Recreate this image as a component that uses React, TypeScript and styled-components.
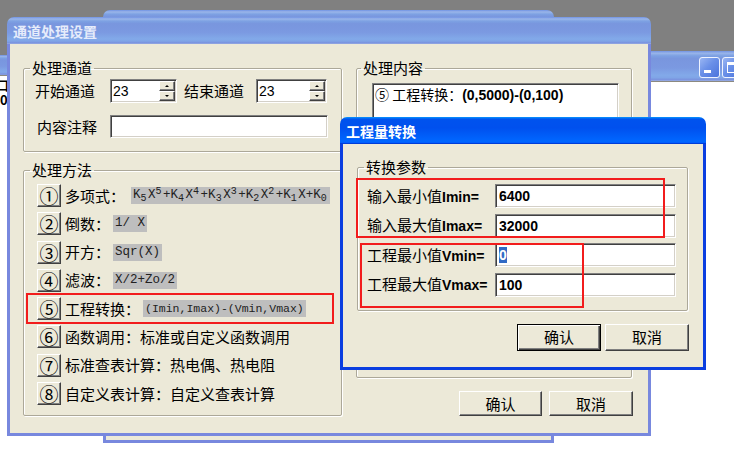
import styled, { createGlobalStyle, css } from 'styled-components'

const CJK = `"Noto Sans CJK SC", "Noto Sans CJK TC", sans-serif`
const SANS = `"Liberation Sans", Arial, sans-serif`
const MONO = `"Liberation Mono", "DejaVu Sans Mono", monospace`

const INACTIVE_TITLE =
  'linear-gradient(180deg, #7697e7 0%, #7e9ee3 3%, #94afe8 6%, #97b4e9 8%, #82a5e4 14%, #7c9fe2 17%, #7996de 25%, #7b99e1 56%, #82a9e9 81%, #80a5e7 89%, #7b96e1 94%, #7a93df 97%, #abbae3 100%)'
const ACTIVE_TITLE =
  'linear-gradient(180deg, #0997ff 0%, #0053ee 8%, #0050ee 40%, #0066ff 88%, #0066ff 93%, #005bff 95%, #003dd7 96%, #003dd7 100%)'

const GlobalStyle = createGlobalStyle`
  html, body { margin: 0; padding: 0; }
  body { font-family: ${CJK}; color: #000; }
`

const raised = css`
  border: 1px solid;
  border-color: #fff #404040 #404040 #fff;
  box-shadow: inset -1px -1px 0 #808080;
  background: #ece9d8;
`

const sunken = css`
  border: 1px solid;
  border-color: #808080 #fff #fff #808080;
  box-shadow: inset 1px 1px 0 #404040, inset -1px -1px 0 #d4d0c8;
  background: #fff;
`

const Desktop = styled.div`
  position: relative;
  width: 734px;
  height: 454px;
  overflow: hidden;
  background: #808080;
`

const Window = styled.div<{ $x: number; $y: number; $w: number; $h: number }>`
  position: absolute;
  left: ${p => p.$x}px;
  top: ${p => p.$y}px;
  width: ${p => p.$w}px;
  height: ${p => p.$h}px;
  display: flex;
  flex-direction: column;
  border-radius: 7px 7px 0 0;
  overflow: hidden;
`

const TitleBar = styled.div<{ $active?: boolean; $h: number }>`
  flex: none;
  height: ${p => p.$h}px;
  box-sizing: border-box;
  display: flex;
  align-items: center;
  padding: 0 5px 0 6px;
  background: ${p => (p.$active ? ACTIVE_TITLE : INACTIVE_TITLE)};
  color: ${p => (p.$active ? '#fff' : '#e6ecfb')};
  font: bold 14px/16px ${CJK};
  white-space: nowrap;
`

const Frame = styled.div<{ $active?: boolean }>`
  flex: 1;
  min-height: 0;
  border: 3px solid ${p => (p.$active ? '#0a3ee0' : '#7888de')};
  border-top: none;
  background: #ece9d8;
`

const Paper = styled.div`
  flex: 1;
  min-height: 0;
  background: #fff;
  border-top: 1px solid #8c8a80;
`

const Controls = styled.div`
  margin-left: auto;
  align-self: flex-start;
  padding-top: 6px;
  display: flex;
  gap: 2px;
`

const ControlButton = styled.div`
  width: 21px;
  height: 21px;
  box-sizing: border-box;
  border: 1px solid #eef3ff;
  border-radius: 3px;
  background: linear-gradient(135deg, #9ab6f3 0%, #6a90e8 45%, #4b74dc 100%);
  display: flex;
  align-items: center;
  justify-content: center;
`

const BackBody = styled.div`
  width: 307px;
  box-sizing: border-box;
  overflow: hidden;
  padding: 2px 0 0 296px;
  font: bold 13px/14px ${CJK};
`

const BackLine = styled.div<{ $indent: number }>`
  padding-left: ${p => p.$indent}px;
  margin-bottom: 1px;
`

const Mark = styled.div<{ $x: number; $y: number; $w: number; $h: number }>`
  position: absolute;
  left: ${p => p.$x}px;
  top: ${p => p.$y}px;
  width: ${p => p.$w}px;
  height: ${p => p.$h}px;
  box-sizing: border-box;
  border: 2px solid #f21c1c;
  pointer-events: none;
`

const Group = styled.fieldset<{ $indent: number; $grow?: boolean }>`
  margin: 0;
  min-width: 0;
  padding: 0 0 0 ${p => p.$indent}px;
  border: 1px solid #aca899;
  border-radius: 2px;
  box-shadow: 1px 1px 0 #fff, inset 1px 1px 0 #fff;
  ${p => p.$grow && 'flex: 1;'}
`

const Legend = styled.legend`
  padding: 0 2px;
  font: 15px/16px ${CJK};
`

const GroupBody = styled.div<{ $pad: string; $gap: number }>`
  display: flex;
  flex-direction: column;
  gap: ${p => p.$gap}px;
  padding: ${p => p.$pad};
`

const MainBody = styled.div`
  display: grid;
  grid-template-columns: 319px 276px;
  column-gap: 14px;
  padding: 16px 0 0 13px;
`

const Column = styled.div<{ $gap: number }>`
  display: flex;
  flex-direction: column;
  gap: ${p => p.$gap}px;
`

const FieldRow = styled.div`
  display: flex;
  align-items: center;
`

const FieldLabel = styled.span<{ $w: number; $indent?: number }>`
  flex: none;
  width: ${p => p.$w}px;
  padding-left: ${p => p.$indent ?? 0}px;
  box-sizing: border-box;
  font: 15px/16px ${CJK};
  white-space: nowrap;
`

const Ascii = styled.span`
  font: bold 14px/16px ${SANS};
`

const Field = styled.div<{ $w: number; $h: number }>`
  ${sunken};
  flex: none;
  width: ${p => p.$w}px;
  height: ${p => p.$h}px;
  box-sizing: border-box;
  display: flex;
  align-items: center;
  padding-left: 3px;
  font: bold 14px/16px ${SANS};
`

const Selected = styled.span`
  background: #316ac5;
  color: #fff;
`

const SpinBox = styled.div<{ $w: number }>`
  ${sunken};
  flex: none;
  width: ${p => p.$w}px;
  height: 24px;
  box-sizing: border-box;
  display: flex;
  padding: 1px 1px 1px 2px;
`

const SpinValue = styled.span`
  flex: 1;
  font: 14px/20px ${SANS};
`

const Spinner = styled.div`
  width: 16px;
  display: flex;
  flex-direction: column;
`

const SpinArrow = styled.div<{ $down?: boolean }>`
  ${raised};
  flex: 1;
  display: flex;
  align-items: center;
  justify-content: center;
  &::after {
    content: '';
    border-left: 2px solid transparent;
    border-right: 2px solid transparent;
    ${p => (p.$down ? 'border-top: 2px solid #000;' : 'border-bottom: 2px solid #000;')}
  }
`

const ContentBox = styled.div`
  ${sunken};
  width: 247px;
  height: 64px;
  box-sizing: border-box;
  padding: 2px 2px;
  font: 14px/17px ${CJK};
  white-space: nowrap;
`

const MethodRow = styled.div`
  display: flex;
  align-items: center;
  height: 23px;
`

const NumButton = styled.div`
  ${raised};
  flex: none;
  width: 24px;
  height: 23px;
  box-sizing: border-box;
  display: flex;
  align-items: center;
  justify-content: center;
  font: 19px/1 ${CJK};
`

const MethodText = styled.span`
  margin-left: 4px;
  font: 15px/16px ${CJK};
  white-space: nowrap;
`

const Formula = styled.span<{ $gap?: number; $size?: number }>`
  display: inline-block;
  margin-left: ${p => p.$gap ?? 3}px;
  padding: 0 2px;
  height: 17px;
  background: #bebebe;
  color: #222;
  font: ${p => p.$size ?? 12.5}px/17px ${MONO};
  white-space: pre;
`

const Idx = styled.span<{ $sub?: boolean }>`
  display: inline-block;
  width: 7.5px;
  font-size: 10px;
  line-height: 10px;
  vertical-align: ${p => (p.$sub ? '-3px' : '4px')};
`

const ButtonRow = styled.div<{ $top: number; $gap: number; $shift?: number }>`
  display: flex;
  justify-content: flex-end;
  gap: ${p => p.$gap}px;
  margin-top: ${p => p.$top}px;
  margin-right: ${p => p.$shift ?? 0}px;
`

const PushButton = styled.div<{ $w: number; $h: number; $default?: boolean }>`
  ${raised};
  width: ${p => p.$w}px;
  height: ${p => p.$h}px;
  box-sizing: border-box;
  display: flex;
  align-items: center;
  justify-content: center;
  font: 15px/16px ${CJK};
  ${p =>
    p.$default &&
    css`
      border-color: #000;
      box-shadow: inset 1px 1px 0 #fff, inset -1px -1px 0 #404040, inset -2px -2px 0 #808080;
    `}
`

const PopupBody = styled.div`
  display: flex;
  flex-direction: column;
  padding: 15px 15px 0 14px;
`

const K = (i: number) => (
  <>
    K<Idx $sub>{i}</Idx>
  </>
)
const XP = (i: number) => (
  <>
    X<Idx>{i}</Idx>
  </>
)

const methods = [
  {
    n: '①',
    text: '多项式：',
    formula: (
      <Formula $gap={6}>
        {K(5)}{XP(5)}+{K(4)}{XP(4)}+{K(3)}{XP(3)}+{K(2)}{XP(2)}+{K(1)}X+{K(0)}
      </Formula>
    ),
  },
  { n: '②', text: '倒数：', formula: <Formula>1/ X</Formula> },
  { n: '③', text: '开方：', formula: <Formula>Sqr(X)</Formula> },
  { n: '④', text: '滤波：', formula: <Formula>X/2+Zo/2</Formula> },
  { n: '⑤', text: '工程转换：', formula: <Formula $size={11.5}>(Imin,Imax)-(Vmin,Vmax)</Formula> },
  { n: '⑥', text: '函数调用：标准或自定义函数调用' },
  { n: '⑦', text: '标准查表计算：热电偶、热电阻' },
  { n: '⑧', text: '自定义表计算：自定义查表计算' },
]

const params = [
  { label: '输入最小值', sym: 'Imin=', value: <>6400</> },
  { label: '输入最大值', sym: 'Imax=', value: <>32000</> },
  { label: '工程最小值', sym: 'Vmin=', value: <Selected>0</Selected> },
  { label: '工程最大值', sym: 'Vmax=', value: <>100</> },
]

const MinIcon = () => (
  <svg width="19" height="19" viewBox="0 0 19 19">
    <rect x="4" y="12" width="7" height="3" fill="#fff" />
  </svg>
)

const MaxIcon = () => (
  <svg width="19" height="19" viewBox="0 0 19 19">
    <rect x="4.5" y="4.5" width="10" height="10" fill="none" stroke="#fff" />
    <rect x="4" y="4" width="11" height="3" fill="#fff" />
  </svg>
)

const CloseIcon = () => (
  <svg width="19" height="19" viewBox="0 0 19 19">
    <path d="M5 5 L14 14 M14 5 L5 14" stroke="#fff" strokeWidth="2" />
  </svg>
)

export default function App() {
  return (
    <>
      <GlobalStyle />
      <Desktop>
        <Window $x={-300} $y={55} $w={1100} $h={430}>
          <TitleBar $h={20} />
          <Paper>
            <BackBody>
              <BackLine $indent={0}>口</BackLine>
              <BackLine $indent={4}>0</BackLine>
            </BackBody>
          </Paper>
        </Window>

        <Window $x={560} $y={51} $w={211} $h={430}>
          <TitleBar $h={30}>
            <Controls>
              <ControlButton><MinIcon /></ControlButton>
              <ControlButton><MaxIcon /></ControlButton>
              <ControlButton><CloseIcon /></ControlButton>
            </Controls>
          </TitleBar>
          <Paper />
        </Window>

        <Window $x={103} $y={10} $w={451} $h={433}>
          <TitleBar $h={27} />
          <Frame />
        </Window>

        <Window $x={7} $y={17} $w={644} $h={419}>
          <TitleBar $h={27}>通道处理设置</TitleBar>
          <Frame>
            <MainBody>
              <Column $gap={10}>
                <Group $indent={6}>
                  <Legend>处理通道</Legend>
                  <GroupBody $pad="3px 0 13px 5px" $gap={12}>
                    <FieldRow>
                      <FieldLabel $w={75}>开始通道</FieldLabel>
                      <SpinBox $w={67}>
                        <SpinValue>23</SpinValue>
                        <Spinner>
                          <SpinArrow />
                          <SpinArrow $down />
                        </Spinner>
                      </SpinBox>
                      <FieldLabel $w={79} $indent={7}>结束通道</FieldLabel>
                      <SpinBox $w={71}>
                        <SpinValue>23</SpinValue>
                        <Spinner>
                          <SpinArrow />
                          <SpinArrow $down />
                        </Spinner>
                      </SpinBox>
                    </FieldRow>
                    <FieldRow>
                      <FieldLabel $w={75} $indent={2}>内容注释</FieldLabel>
                      <Field $w={218} $h={23} />
                    </FieldRow>
                  </GroupBody>
                </Group>

                <Group $indent={6} $grow>
                  <Legend>处理方法</Legend>
                  <GroupBody $pad="6px 0 10px 7px" $gap={5.3}>
                    {methods.map(m => (
                      <MethodRow key={m.n}>
                        <NumButton>{m.n}</NumButton>
                        <MethodText>{m.text}</MethodText>
                        {m.formula}
                      </MethodRow>
                    ))}
                  </GroupBody>
                </Group>
              </Column>

              <Column $gap={0}>
                <Group $indent={4} $grow>
                  <Legend>处理内容</Legend>
                  <GroupBody $pad="7px 0 0 11px" $gap={0}>
                    <ContentBox>
                      ⑤ 工程转换：<Ascii>(0,5000)-(0,100)</Ascii>
                    </ContentBox>
                  </GroupBody>
                </Group>
                <ButtonRow $top={13} $gap={7} $shift={-1}>
                  <PushButton $w={83} $h={25}>确认</PushButton>
                  <PushButton $w={84} $h={25}>取消</PushButton>
                </ButtonRow>
              </Column>
            </MainBody>
          </Frame>
          <Mark $x={19} $y={276} $w={308} $h={31} />
        </Window>

        <Window $x={340} $y={117} $w={366} $h={253}>
          <TitleBar $active $h={27}>工程量转换</TitleBar>
          <Frame $active>
            <PopupBody>
              <Group $indent={6}>
                <Legend>转换参数</Legend>
                <GroupBody $pad="9px 0 13px 3px" $gap={5.5}>
                  {params.map(p => (
                    <FieldRow key={p.sym}>
                      <FieldLabel $w={128}>
                        {p.label}
                        <Ascii>{p.sym}</Ascii>
                      </FieldLabel>
                      <Field $w={181} $h={24}>{p.value}</Field>
                    </FieldRow>
                  ))}
                </GroupBody>
              </Group>
              <ButtonRow $top={13} $gap={4} $shift={-1}>
                <PushButton $w={84} $h={27} $default>确认</PushButton>
                <PushButton $w={84} $h={27}>取消</PushButton>
              </ButtonRow>
            </PopupBody>
          </Frame>
          <Mark $x={16} $y={61} $w={309} $h={60} />
          <Mark $x={20} $y={126} $w={224} $h={65} />
        </Window>
      </Desktop>
    </>
  )
}
